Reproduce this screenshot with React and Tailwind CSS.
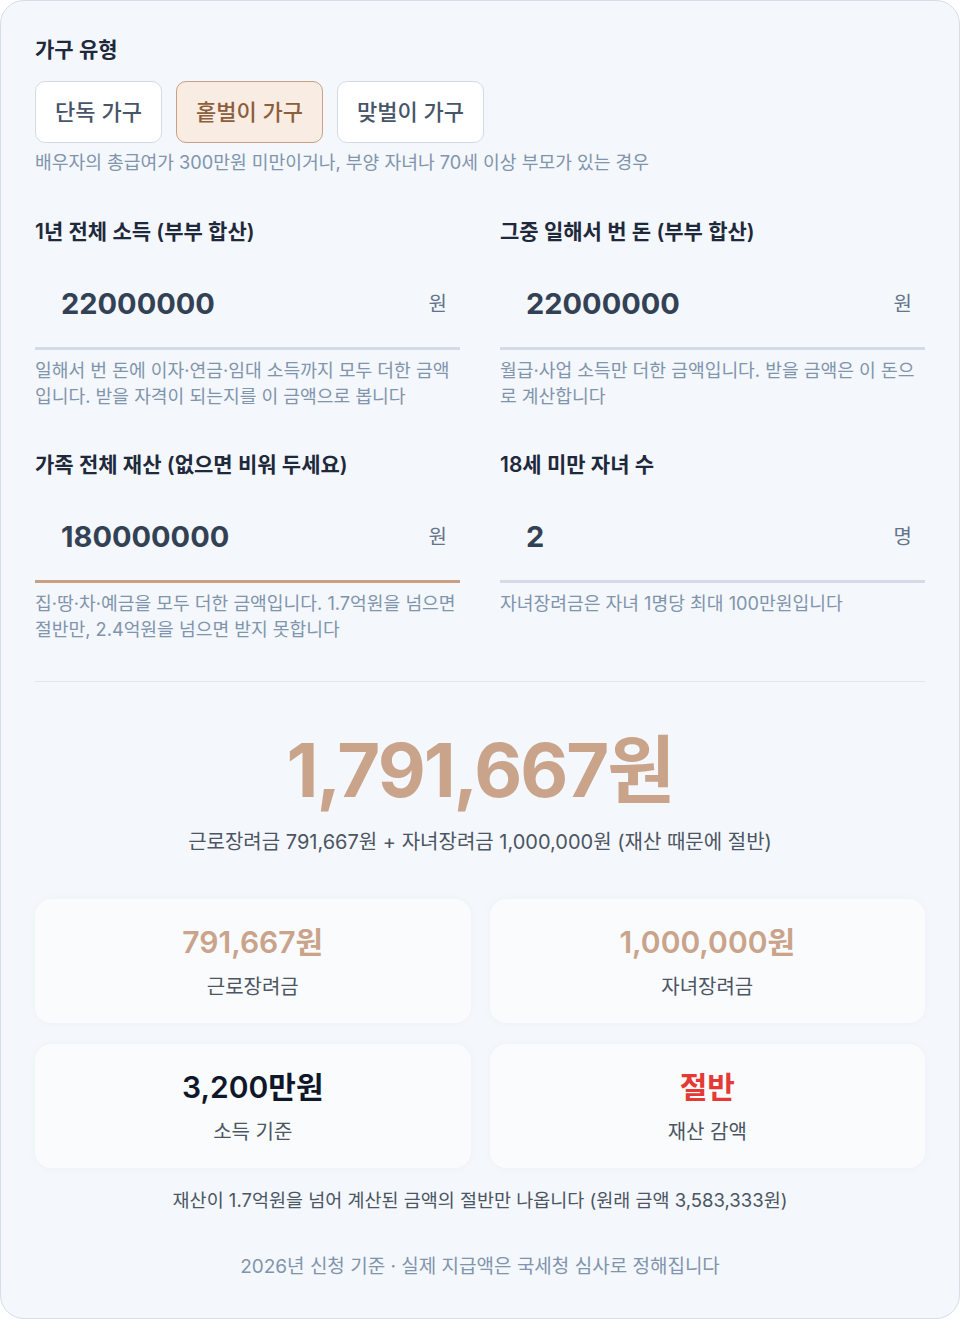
import React, { useState } from 'react';

const FONT = { fontFamily: 'Inter, "Noto Sans CJK KR", "Noto Sans", sans-serif' };

const householdTypes = ['단독 가구', '홑벌이 가구', '맞벌이 가구'];

const Field = ({ label, value, unit, help, active }) => (
  <div className="flex flex-col">
    <label className="text-[21px] font-semibold text-[#1e293b] leading-[28px]">{label}</label>
    <div
      className={`mt-[37px] flex items-center justify-between pl-[26px] pr-[13px] pb-[22px] border-b-[3px] ${
        active ? 'border-[#c9a083]' : 'border-[#d3dce6]'
      }`}
    >
      <span className="text-[29px] font-bold text-[#334155] leading-[42px]">{value}</span>
      <span className="text-[20px] text-[#64748b] leading-[28px]">{unit}</span>
    </div>
    <p className="mt-[7px] text-[18.2px] leading-[26px] text-[#8094ad]">{help}</p>
  </div>
);

const StatCard = ({ value, label, color }) => (
  <div className="flex flex-col items-center justify-center h-[124px] rounded-2xl bg-[#f9fbfd] shadow-[0_0_6px_rgba(148,163,184,0.08)]">
    <span className={`text-[30px] font-semibold leading-[38px] ${color}`}>{value}</span>
    <span className="mt-[13px] text-[20px] text-[#4b5563] leading-[26px]">{label}</span>
  </div>
);

export default function App() {
  const [type, setType] = useState(1);

  return (
    <div className="bg-white min-h-screen" style={FONT}>
      <div className="w-[960px] h-[1319px] rounded-[24px] border-[1.5px] border-[#d5dde8] bg-[#f4f7fb] px-[34px] pt-[34px]">
        {/* household type */}
        <h2 className="text-[21px] font-semibold text-[#1e293b] leading-[30px]">가구 유형</h2>
        <div className="mt-[16px] flex gap-[14px]">
          {householdTypes.map((t, i) => (
            <button
              key={t}
              onClick={() => setType(i)}
              className={`h-[62px] rounded-[10px] border-[1.5px] text-[22px] font-medium ${
                i === 0 ? 'w-[127px]' : 'w-[147px]'
              } ${
                type === i
                  ? 'bg-[#f9ece2] border-[#c9a083] text-[#8b5e3c]'
                  : 'bg-white border-[#d3dce6] text-[#475569]'
              }`}
            >
              {t}
            </button>
          ))}
        </div>
        <p className="mt-[6px] text-[18.2px] leading-[26px] text-[#8094ad]">
          배우자의 총급여가 300만원 미만이거나, 부양 자녀나 70세 이상 부모가 있는 경우
        </p>

        {/* inputs */}
        <div className="mt-[43px] grid grid-cols-2 gap-x-[40px] gap-y-[42px]">
          <Field
            label="1년 전체 소득 (부부 합산)"
            value="22000000"
            unit="원"
            help="일해서 번 돈에 이자·연금·임대 소득까지 모두 더한 금액입니다. 받을 자격이 되는지를 이 금액으로 봅니다"
          />
          <Field
            label="그중 일해서 번 돈 (부부 합산)"
            value="22000000"
            unit="원"
            help="월급·사업 소득만 더한 금액입니다. 받을 금액은 이 돈으로 계산합니다"
          />
          <Field
            label="가족 전체 재산 (없으면 비워 두세요)"
            value="180000000"
            unit="원"
            active
            help="집·땅·차·예금을 모두 더한 금액입니다. 1.7억원을 넘으면 절반만, 2.4억원을 넘으면 받지 못합니다"
          />
          <Field label="18세 미만 자녀 수" value="2" unit="명" help="자녀장려금은 자녀 1명당 최대 100만원입니다" />
        </div>

        <div className="mt-[39px] border-t-[1.5px] border-[#e2e8f0]" />

        {/* result */}
        <div className="mt-[42px] flex flex-col items-center">
          <div className="text-[74px] font-bold leading-[92px] tracking-[-2px] text-[#c9a38a]">1,791,667원</div>
          <p className="mt-[12px] text-[20px] leading-[28px] text-[#4b5563]">
            근로장려금 791,667원 + 자녀장려금 1,000,000원 (재산 때문에 절반)
          </p>
        </div>

        <div className="mt-[43px] grid grid-cols-2 gap-x-[19px] gap-y-[21px]">
          <StatCard value="791,667원" label="근로장려금" color="text-[#c9a38a]" />
          <StatCard value="1,000,000원" label="자녀장려금" color="text-[#c9a38a]" />
          <StatCard value="3,200만원" label="소득 기준" color="text-[#0f172a]" />
          <StatCard value="절반" label="재산 감액" color="text-[#e53935]" />
        </div>

        <p className="mt-[18px] text-center text-[18.5px] leading-[28px] text-[#4b5563]">
          재산이 1.7억원을 넘어 계산된 금액의 절반만 나옵니다 (원래 금액 3,583,333원)
        </p>
        <p className="mt-[39px] text-center text-[19px] leading-[28px] text-[#8094ad]">
          2026년 신청 기준 · 실제 지급액은 국세청 심사로 정해집니다
        </p>
      </div>
    </div>
  );
}
